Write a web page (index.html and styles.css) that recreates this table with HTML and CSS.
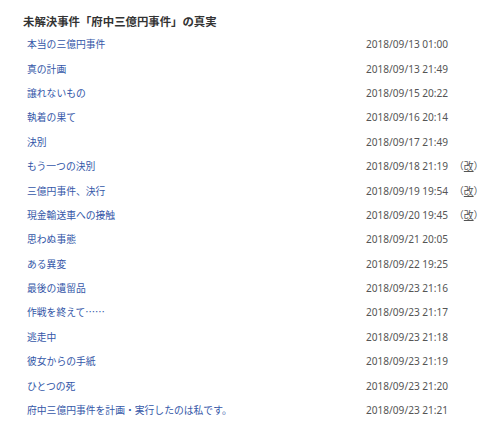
FILE: index.html
```html
<!DOCTYPE html>
<html lang="ja">
<head>
    <meta charset="UTF-8">
    <meta name="viewport" content="width=device-width, initial-scale=1.0">
    <title>未解決事件「府中三億円事件」の真実</title>
    <link rel="stylesheet" href="styles.css">
</head>
<body>
    <div class="story">
        <h2 class="story-title">未解決事件「府中三億円事件」の真実</h2>
        <ul class="episode-list">
            <li class="episode"><a href="#">本当の三億円事件</a><span class="date">2018/09/13 01:00</span><span class="mark"></span></li>
            <li class="episode"><a href="#">真の計画</a><span class="date">2018/09/13 21:49</span><span class="mark"></span></li>
            <li class="episode"><a href="#">譲れないもの</a><span class="date">2018/09/15 20:22</span><span class="mark"></span></li>
            <li class="episode"><a href="#">執着の果て</a><span class="date">2018/09/16 20:14</span><span class="mark"></span></li>
            <li class="episode"><a href="#">決別</a><span class="date">2018/09/17 21:49</span><span class="mark"></span></li>
            <li class="episode"><a href="#">もう一つの決別</a><span class="date">2018/09/18 21:19</span><span class="mark">（<u>改</u>）</span></li>
            <li class="episode"><a href="#">三億円事件、決行</a><span class="date">2018/09/19 19:54</span><span class="mark">（<u>改</u>）</span></li>
            <li class="episode"><a href="#">現金輸送車への接触</a><span class="date">2018/09/20 19:45</span><span class="mark">（<u>改</u>）</span></li>
            <li class="episode"><a href="#">思わぬ事態</a><span class="date">2018/09/21 20:05</span><span class="mark"></span></li>
            <li class="episode"><a href="#">ある異変</a><span class="date">2018/09/22 19:25</span><span class="mark"></span></li>
            <li class="episode"><a href="#">最後の遺留品</a><span class="date">2018/09/23 21:16</span><span class="mark"></span></li>
            <li class="episode"><a href="#">作戦を終えて……</a><span class="date">2018/09/23 21:17</span><span class="mark"></span></li>
            <li class="episode"><a href="#">逃走中</a><span class="date">2018/09/23 21:18</span><span class="mark"></span></li>
            <li class="episode"><a href="#">彼女からの手紙</a><span class="date">2018/09/23 21:19</span><span class="mark"></span></li>
            <li class="episode"><a href="#">ひとつの死</a><span class="date">2018/09/23 21:20</span><span class="mark"></span></li>
            <li class="episode"><a href="#">府中三億円事件を計画・実行したのは私です。</a><span class="date">2018/09/23 21:21</span><span class="mark"></span></li>
        </ul>
    </div>
</body>
</html>
```

FILE: styles.css
```css
body {
    margin: 0;
    padding: 0;
    background-color: #fff;
    font-family: "Noto Sans CJK JP", sans-serif;
}

.story {
    padding: 12px 0 0 23px;
}

/* Title */
.story-title {
    margin: 0 0 2px 0;
    font-size: 11.4px;
    line-height: 18px;
    font-weight: bold;
    color: #333;
}

/* Episode list */
.episode-list {
    list-style: none;
    margin: 0;
    padding: 0;
}

.episode {
    display: flex;
    align-items: center;
    height: 24.4px;
}

.episode a {
    flex: 1;
    padding-left: 4px;
    font-size: 9.8px;
    color: #3457a8;
    text-decoration: none;
}

.date {
    width: 93px;
    font-family: "Noto Sans", sans-serif;
    font-size: 10.1px;
    color: #555;
}

.mark {
    width: 36px;
    font-size: 9.8px;
    color: #555;
    margin-left: -5px;
    white-space: nowrap;
}
```
